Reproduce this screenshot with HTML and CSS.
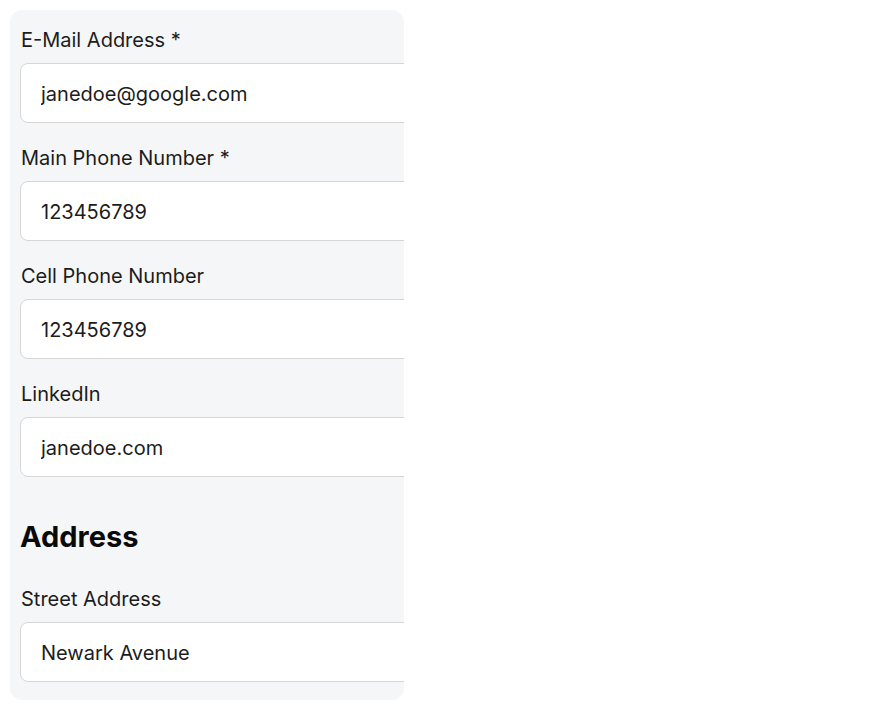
FILE: index.html
```html
<!DOCTYPE html>
<html lang="en">
<head>
    <meta charset="UTF-8">
    <meta name="viewport" content="width=device-width, initial-scale=1.0">
    <title>Contact Details</title>
    <link rel="stylesheet" href="styles.css">
</head>
<body>
    <div class="card">
        <div class="field">
            <label class="field-label">E-Mail Address *</label>
            <input class="field-input" type="text" value="janedoe@google.com">
        </div>
        <div class="field">
            <label class="field-label">Main Phone Number *</label>
            <input class="field-input" type="text" value="123456789">
        </div>
        <div class="field">
            <label class="field-label">Cell Phone Number</label>
            <input class="field-input" type="text" value="123456789">
        </div>
        <div class="field">
            <label class="field-label">LinkedIn</label>
            <input class="field-input" type="text" value="janedoe.com">
        </div>

        <h2 class="section-title">Address</h2>

        <div class="field">
            <label class="field-label">Street Address</label>
            <input class="field-input" type="text" value="Newark Avenue">
        </div>
    </div>
</body>
</html>
```

FILE: styles.css
```css
* {
    box-sizing: border-box;
    margin: 0;
    padding: 0;
}

body {
    font-family: 'Inter', 'Noto Sans', sans-serif;
    background: #fff;
    color: #1c1c1c;
}

.card {
    width: 394px;
    margin: 10px;
    padding: 17px 0 18px 10px;
    background-color: #f5f6f8;
    border-radius: 12px;
    overflow: hidden;
    display: flex;
    flex-direction: column;
    gap: 22px;
}

.field {
    display: flex;
    flex-direction: column;
    gap: 8px;
}

.field-label {
    font-size: 20px;
    line-height: 26px;
    padding: 0 0 2px 1px;
}

.field-input {
    width: 520px;
    height: 60px;
    padding: 2px 20px 0;
    font-family: inherit;
    font-size: 20px;
    color: #1c1c1c;
    background-color: #fff;
    border: 1px solid #d6d6d6;
    border-radius: 8px;
    outline: none;
}

.section-title {
    font-size: 29px;
    font-weight: 700;
    line-height: 35px;
    color: #0a0a0a;
    margin-top: 20px;
    margin-bottom: 10px;
}
```
